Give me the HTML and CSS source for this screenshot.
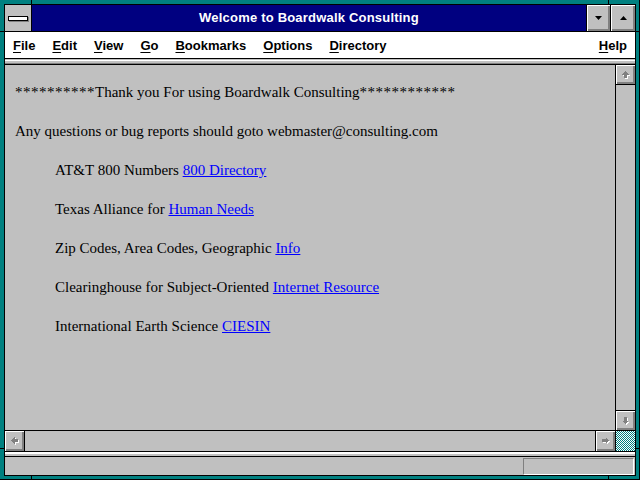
FILE: index.html
```html
<!DOCTYPE html>
<html>
<head>
<meta charset="utf-8">
<title>Welcome to Boardwalk Consulting</title>
<link rel="stylesheet" href="styles.css">
</head>
<body>
<div class="frame">
  <span class="tick t1"></span><span class="tick t2"></span>
  <span class="tick t3"></span><span class="tick t4"></span>
  <span class="tick t5"></span><span class="tick t6"></span>
  <span class="tick t7"></span><span class="tick t8"></span>
  <div class="win">
    <div class="titlebar">
      <div class="sysbox"><div class="sysbar"></div></div>
      <div class="title">Welcome to Boardwalk Consulting</div>
      <div class="tbtn min"><svg width="7" height="4" viewBox="0 0 7 4"><polygon points="0,0 7,0 3.5,4" fill="#000"/></svg></div>
      <div class="tbtn max"><svg width="7" height="4" viewBox="0 0 7 4"><polygon points="3.5,0 7,4 0,4" fill="#000"/></svg></div>
    </div>
    <div class="menubar">
      <span><u>F</u>ile</span>
      <span><u>E</u>dit</span>
      <span><u>V</u>iew</span>
      <span><u>G</u>o</span>
      <span><u>B</u>ookmarks</span>
      <span><u>O</u>ptions</span>
      <span><u>D</u>irectory</span>
      <span class="help"><u>H</u>elp</span>
    </div>
    <div class="strip"></div>
    <div class="main">
      <div class="content">
        <p><span class="stars">**********</span>Thank you For using Boardwalk Consulting<span class="stars">************</span></p>
        <p>Any questions or bug reports should goto webmaster@consulting.com</p>
        <p class="ind">AT&amp;T 800 Numbers <a href="#">800 Directory</a></p>
        <p class="ind">Texas Alliance for <a href="#">Human Needs</a></p>
        <p class="ind">Zip Codes, Area Codes, Geographic <a href="#">Info</a></p>
        <p class="ind">Clearinghouse for Subject-Oriented <a href="#">Internet Resource</a></p>
        <p class="ind">International Earth Science <a href="#">CIESIN</a></p>
      </div>
      <div class="vscroll">
        <div class="sbtn up"><svg width="10" height="10" viewBox="0 0 10 10"><polygon points="5.5,2 9,5.5 7,5.5 7,9 4,9 4,5.5 2,5.5" fill="#fff"/><polygon points="4.5,1 8,4.5 6,4.5 6,8 3,8 3,4.5 1,4.5" fill="#808080"/></svg></div>
        <div class="track"></div>
        <div class="sbtn down"><svg width="10" height="10" viewBox="0 0 10 10"><polygon points="4,2 7,2 7,5.5 9,5.5 5.5,9 2,5.5 4,5.5" fill="#fff"/><polygon points="3,1 6,1 6,4.5 8,4.5 4.5,8 1,4.5 3,4.5" fill="#808080"/></svg></div>
      </div>
    </div>
    <div class="hscroll">
      <div class="sbtn left"><svg width="10" height="10" viewBox="0 0 10 10"><polygon points="2,5.5 5.5,2 5.5,4 9,4 9,7 5.5,7 5.5,9" fill="#fff"/><polygon points="1,4.5 4.5,1 4.5,3 8,3 8,6 4.5,6 4.5,8" fill="#808080"/></svg></div>
      <div class="track"></div>
      <div class="sbtn right"><svg width="10" height="10" viewBox="0 0 10 10"><polygon points="9,5.5 5.5,2 5.5,4 2,4 2,7 5.5,7 5.5,9" fill="#fff"/><polygon points="8,4.5 4.5,1 4.5,3 1,3 1,6 4.5,6 4.5,8" fill="#808080"/></svg></div>
      <div class="corner"></div>
    </div>
    <div class="strip2"></div>
    <div class="status"><div class="statbox"></div></div>
  </div>
</div>
</body>
</html>
```
FILE: styles.css
```css
body {
  margin: 0;
}
.frame {
  position: relative;
  width: 640px;
  height: 480px;
  box-sizing: border-box;
  background: #008080;
  padding: 4px 3px 3px 4px;
  border-right: 1px solid #000;
  border-bottom: 1px solid #000;
}
.tick {
  position: absolute;
  background: #000;
}
.t1 { left: 31px; top: 0; width: 1px; height: 4px; }
.t2 { left: 608px; top: 0; width: 1px; height: 4px; }
.t3 { left: 31px; bottom: 0; width: 1px; height: 4px; }
.t4 { left: 608px; bottom: 0; width: 1px; height: 4px; }
.t5 { left: 0; top: 31px; width: 4px; height: 1px; }
.t6 { right: 0; top: 31px; width: 4px; height: 1px; }
.t7 { left: 0; top: 448px; width: 4px; height: 1px; }
.t8 { right: 0; top: 448px; width: 4px; height: 1px; }

.win {
  height: 100%;
  box-sizing: border-box;
  border: 1px solid #000;
  display: flex;
  flex-direction: column;
  background: #c0c0c0;
}
.titlebar {
  height: 26px;
  flex: none;
  border-bottom: 1px solid #000;
  display: flex;
}
.sysbox {
  width: 26px;
  border-right: 1px solid #000;
  background: #c0c0c0;
  display: flex;
  align-items: center;
  justify-content: center;
}
.sysbar {
  width: 18px;
  height: 3px;
  border: 1px solid #000;
  background: #fff;
  box-shadow: 1px 1px 0 #808080;
}
.title {
  flex: 1;
  background: #000080;
  color: #fff;
  font: bold 13px "Liberation Sans", Arial, sans-serif;
  letter-spacing: 0.2px;
  text-align: center;
  line-height: 26px;
}
.tbtn {
  border-left: 1px solid #000;
  background: #c0c0c0;
  box-shadow: inset 1px 1px 0 #fff, inset -1px -1px 0 #808080, inset -2px -2px 0 #808080;
  display: flex;
  align-items: center;
  justify-content: center;
}
.tbtn.min { width: 23px; }
.tbtn.max { width: 24px; }
.tbtn svg { display: block; }

.menubar {
  height: 26px;
  flex: none;
  border-bottom: 1px solid #000;
  background: #fff;
  display: flex;
  align-items: center;
  gap: 17px;
  padding: 0 8px;
  font: bold 13px "Liberation Sans", Arial, sans-serif;
  color: #000;
}
.menubar u {
  text-underline-offset: 2px;
}
.menubar .help {
  margin-left: auto;
}
.strip {
  height: 5px;
  flex: none;
  border-bottom: 1px solid #000;
  background: linear-gradient(to bottom, #c0c0c0 0 1px, #fff 1px 2px, #c0c0c0 2px 4px, #808080 4px 5px);
}
.main {
  flex: 1;
  display: flex;
  border-bottom: 1px solid #000;
  min-height: 0;
}
.content {
  flex: 1;
  padding: 18px 0 0 10px;
  font: 15px "Liberation Serif", "Times New Roman", serif;
  color: #000;
}
.content p {
  margin: 0 0 21px 0;
  line-height: 18px;
  white-space: nowrap;
}
.content p.ind {
  margin-left: 40px;
}
.content .stars {
  letter-spacing: 0.5px;
}
.content a {
  color: #0000ff;
}
.vscroll {
  width: 19px;
  border-left: 1px solid #000;
  display: flex;
  flex-direction: column;
}
.vscroll .track { flex: 1; }
.sbtn {
  background: #c0c0c0;
  box-shadow: inset 1px 1px 0 #fff, inset -1px -1px 0 #808080, inset -2px -2px 0 #808080;
  display: flex;
  align-items: center;
  justify-content: center;
  flex: none;
}
.sbtn svg { display: block; shape-rendering: crispEdges; }
.vscroll .sbtn { height: 19px; }
.vscroll .up { border-bottom: 1px solid #000; }
.vscroll .down { border-top: 1px solid #000; }
.hscroll {
  height: 20px;
  flex: none;
  display: flex;
  border-bottom: 1px solid #000;
}
.hscroll .sbtn { width: 19px; }
.hscroll .left { border-right: 1px solid #000; }
.hscroll .right { border-left: 1px solid #000; }
.hscroll .track { flex: 1; }
.corner {
  width: 19px;
  border-left: 1px solid #000;
  background-color: #fff;
  background-image: conic-gradient(#008080 25%, #fff 0 50%, #008080 0 75%, #fff 0);
  background-size: 2px 2px;
}
.strip2 {
  height: 4px;
  flex: none;
  border-bottom: 1px solid #000;
  background: linear-gradient(to bottom, #fff 0 2px, #c0c0c0 2px 4px);
}
.status {
  height: 18px;
  flex: none;
  display: flex;
  justify-content: flex-end;
  padding: 1px 1px 0 0;
  box-sizing: border-box;
}
.statbox {
  width: 111px;
  height: 17px;
  box-sizing: border-box;
  border-top: 1px solid #808080;
  border-left: 1px solid #808080;
  border-bottom: 1px solid #fff;
  border-right: 1px solid #fff;
}
```
